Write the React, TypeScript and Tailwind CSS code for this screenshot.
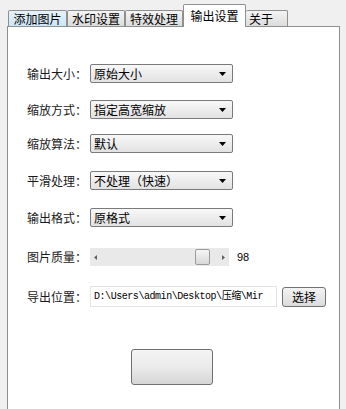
const cjk = "font-['Noto_Sans_CJK_SC',_'Noto_Sans',_sans-serif]";

const Caret = () => (
  <svg width="7" height="4" viewBox="0 0 7 4" className="shrink-0">
    <path d="M0 0h7L3.5 4z" fill="#000" />
  </svg>
);

const Select = ({ value }: { value: string }) => (
  <div className="flex h-[19px] w-[143px] items-center justify-between rounded-[2px] border border-[#7a7a7a] bg-gradient-to-b from-[#f8f8f8] to-[#e2e2e2] pl-[3px] pr-[6px]">
    <span className={`${cjk} text-[12px] leading-none text-black`}>{value}</span>
    <Caret />
  </div>
);

const Row = ({ label, children, className = "" }: { label: string; children: React.ReactNode; className?: string }) => (
  <div className={`flex items-center ${className}`}>
    <span className={`${cjk} w-[63px] text-[12px] leading-none text-[#1a1a1a]`}>{label}</span>
    {children}
  </div>
);

const tabs = [
  { name: "添加图片", w: "w-[59px]", cls: "bg-gradient-to-b from-[#e6f2fb] to-[#cfe5f6]" },
  { name: "水印设置", w: "w-[58px]", cls: "bg-gradient-to-b from-[#f4f4f4] to-[#dcdcdc]" },
  { name: "特效处理", w: "w-[58px]", cls: "bg-gradient-to-b from-[#f4f4f4] to-[#dcdcdc]" },
];

export default function App() {
  return (
    <div className="h-[409px] w-[346px] overflow-hidden bg-[#f0f0f0]">
      <div className="flex h-[26px] items-end pl-[8px] pt-[4px]">
        {tabs.map((t) => (
          <div
            key={t.name}
            className={`${t.w} ${t.cls} ${cjk} flex h-[16px] items-center justify-center rounded-t-[2px] border border-b-0 border-[#8e8f8f] text-[12px] leading-none text-black`}
          >
            {t.name}
          </div>
        ))}
        <div className={`${cjk} relative z-10 -mb-px flex h-[23px] w-[63px] items-center justify-center rounded-t-[2px] border border-b-0 border-[#8e8f8f] bg-white text-[12px] leading-none text-black`}>
          输出设置
        </div>
        <div className={`${cjk} flex h-[16px] w-[42px] items-center justify-start rounded-t-[2px] border border-b-0 border-l-0 border-[#8e8f8f] bg-gradient-to-b from-[#f4f4f4] to-[#dcdcdc] pl-[3px] text-[12px] leading-none text-black`}>
          关于
        </div>
      </div>
      <div className="ml-[7px] h-[400px] w-[333px] border border-b-0 border-[#8e8f8f] bg-white pl-[19px] pt-[37px]">
        <Row label="输出大小：">
          <Select value="原始大小" />
        </Row>
        <Row label="缩放方式：" className="mt-[17px]">
          <Select value="指定高宽缩放" />
        </Row>
        <Row label="缩放算法：" className="mt-[15px]">
          <Select value="默认" />
        </Row>
        <Row label="平滑处理：" className="mt-[18px]">
          <Select value="不处理（快速）" />
        </Row>
        <Row label="输出格式：" className="mt-[18px]">
          <Select value="原格式" />
        </Row>
        <Row label="图片质量：" className="mt-[21px]">
          <div className="flex h-[18px] w-[139px] items-center bg-[#e9e9e9] px-[4px]">
            <svg width="3" height="5" viewBox="0 0 3 5"><path d="M3 0v5L0 2.5z" fill="#606060" /></svg>
            <div className="flex-1" />
            <div className="mr-[12px] h-[16px] w-[15px] rounded-[2px] border border-[#9a9a9a] bg-gradient-to-b from-[#f6f6f6] to-[#d8d8d8]" />
            <svg width="3" height="5" viewBox="0 0 3 5"><path d="M0 0v5L3 2.5z" fill="#606060" /></svg>
          </div>
          <span className="ml-[8px] font-['Liberation_Sans',_sans-serif] text-[11px] leading-none text-black">98</span>
        </Row>
        <Row label="导出位置：" className="mt-[20px]">
          <div className="flex h-[21px] w-[187px] items-center overflow-hidden whitespace-nowrap border border-[#e3e3e3] bg-white pl-[3px] font-['Liberation_Mono',_'Noto_Sans_CJK_SC',_monospace] text-[10px] tracking-[-0.45px] text-black">
            D:\Users\admin\Desktop\压缩\Mir
          </div>
          <div className={`${cjk} ml-[5px] flex h-[20px] w-[44px] items-center justify-center rounded-[3px] border border-[#707070] bg-gradient-to-b from-[#f3f3f3] to-[#dcdcdc] text-[12px] leading-none text-black`}>
            选择
          </div>
        </Row>
        <div className="ml-[104px] mt-[42px] h-[36px] w-[82px] rounded-[3px] border border-[#707070] bg-gradient-to-b from-[#f4f4f4] via-[#ebebeb] to-[#d6d6d6]" />
      </div>
    </div>
  );
}
